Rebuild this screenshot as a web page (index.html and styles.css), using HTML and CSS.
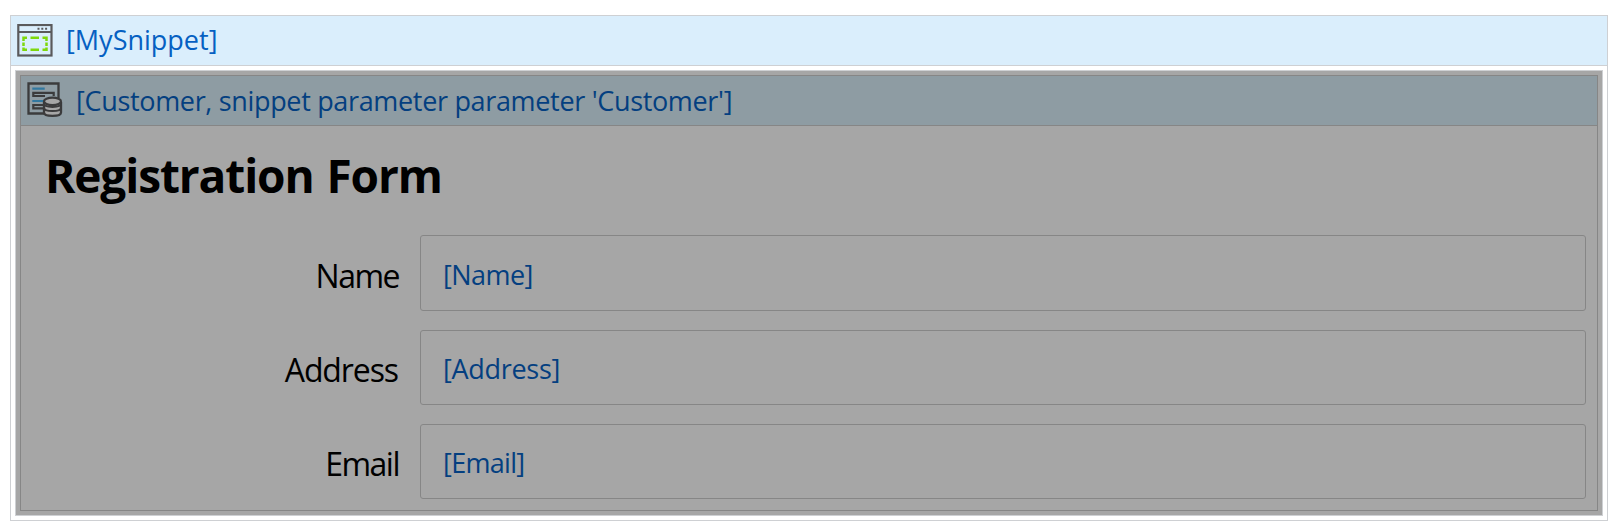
FILE: index.html
```html
<!DOCTYPE html>
<html lang="en">
<head>
<meta charset="utf-8">
<title>MySnippet</title>
<link rel="stylesheet" href="styles.css">
</head>
<body>
<main class="snippet">
  <header class="bar bar-snippet">
    <svg class="icon" width="36" height="34" viewBox="0 0 36 34" fill="none">
      <rect x="1.300" y="1" width="33.200" height="30.500" stroke="#5a5a5c" stroke-width="2.200"/>
      <path d="M1 8H34.5" stroke="#5a5a5c" stroke-width="2"/>
      <path d="M20.500 4.700h2M24.300 4.700h2M28.100 4.700h2" stroke="#5a5a5c" stroke-width="2"/>
      <path d="M6.500 17V13.700H10M13.500 13.700H22M25.500 13.700H29.500V17M29.500 18.500V22M29.500 23.500V25.700H25.500M22 25.700H13.500M10 25.700H6.500V23.500M6.500 22V18.500" stroke="#7ed80c" stroke-width="2.500"/>
    </svg>
    <span class="t-snippet">[MySnippet]</span>
  </header>
  <section class="frame">
    <div class="dataview">
      <header class="bar bar-data">
        <svg class="icon" width="36" height="36" viewBox="0 0 36 36" fill="none">
          <path d="M17 31.500H1.500V1.500H31.500V16" stroke="#3b3b3c" stroke-width="2.300"/>
          <path d="M5.300 6.700H17.700M5.300 19H17" stroke="#3278a0" stroke-width="2.200"/>
          <path d="M18 14H6.300V10.800H26.700V14" stroke="#3b3b3c" stroke-width="2.200"/>
          <path d="M17 26.300H6.300V23H17" stroke="#3b3b3c" stroke-width="2.200"/>
          <path d="M17 20V30.500C17 35 34 35 34 30.500V20" fill="#a6a6a6" stroke="#3b3b3c" stroke-width="2.300"/>
          <path d="M17 25.700C17 30.200 34 30.200 34 25.700M17 21.500C17 26 34 26 34 21.500" stroke="#3b3b3c" stroke-width="2"/>
          <ellipse cx="25.500" cy="19.300" rx="8.500" ry="3.700" fill="#a6a6a6" stroke="#3b3b3c" stroke-width="2.200"/>
        </svg>
        <span class="t-data">[Customer, snippet parameter parameter 'Customer']</span>
      </header>
      <div class="form">
        <h1 class="title">Registration Form</h1>
        <div class="row row-name"><label class="label l-name">Name</label><div class="field"><span class="v-name">[Name]</span></div></div>
        <div class="row"><label class="label l-address">Address</label><div class="field"><span class="v-address">[Address]</span></div></div>
        <div class="row"><label class="label l-email">Email</label><div class="field"><span class="v-email">[Email]</span></div></div>
      </div>
    </div>
  </section>
</main>
</body>
</html>
```
FILE: styles.css
```css
* { box-sizing: border-box; }
body {
  margin: 0;
  padding: 15px 7px 0 10px;
  height: 530px;
  overflow: hidden;
  background: #fff;
  font-family: "Open Sans", "Noto Sans", sans-serif;
}
.snippet {
  height: 506px;
  border: 1px solid #ced0d3;
  background: #fff;
}
.bar {
  display: flex;
  height: 51px;
  white-space: nowrap;
  font-size: 27px;
  line-height: 38px;
}
.icon { flex: none; display: block; }
.bar-snippet {
  height: 50px;
  padding: 8px 0 0 6px;
  gap: 13px;
  color: #0560c2;
  background: #daeefc;
  border-bottom: 1px solid #ced0d3;
}
.t-snippet { line-height: 32px; }
.frame {
  height: 446px;
  margin: 4px 4px 0;
  padding: 4px;
  background: #a6a6a6;
  border: 1px solid #ced0d3;
}
.dataview {
  height: 436px;
  border: 1px solid #868686;
}
.bar-data {
  height: 50px;
  padding: 6px 0 0 6px;
  gap: 13px;
  color: #043f80;
  background: #8e9ca3;
  border-bottom: 1px solid #868686;
}
.t-data { letter-spacing: -0.33px; line-height: 37px; }
.form { padding: 17px 11px 0 25px; }
.title {
  margin: 0 0 0 -1px;
  height: 92px;
  font-size: 46px;
  line-height: 64px;
  font-weight: 700;
  letter-spacing: -1.1px;
  word-spacing: 2px;
  color: #000;
}
.row {
  display: flex;
  height: 75px;
  margin-bottom: 19px;
}
.row-name { height: 76px; }
.row-name .label { padding-top: 19px; }
.row-name .field { padding-top: 20px; }
.label {
  flex: none;
  width: 374px;
  text-align: right;
  font-size: 32px;
  line-height: 44px;
  padding: 18px 22px 0 0;
  letter-spacing: -1.1px;
  color: #000;
}
.l-name, .l-email {
  padding-right: 21px;
  letter-spacing: -1.5px;
}
.field {
  flex: 1;
  padding: 19px 0 0 22px;
  border: 1px solid #868686;
  border-radius: 3px;
  font-size: 27px;
  line-height: 38px;
  color: #043f80;
}
.v-name { letter-spacing: -0.55px; }
.v-email { letter-spacing: -0.7px; }
.v-address { letter-spacing: -0.3px; }
```
